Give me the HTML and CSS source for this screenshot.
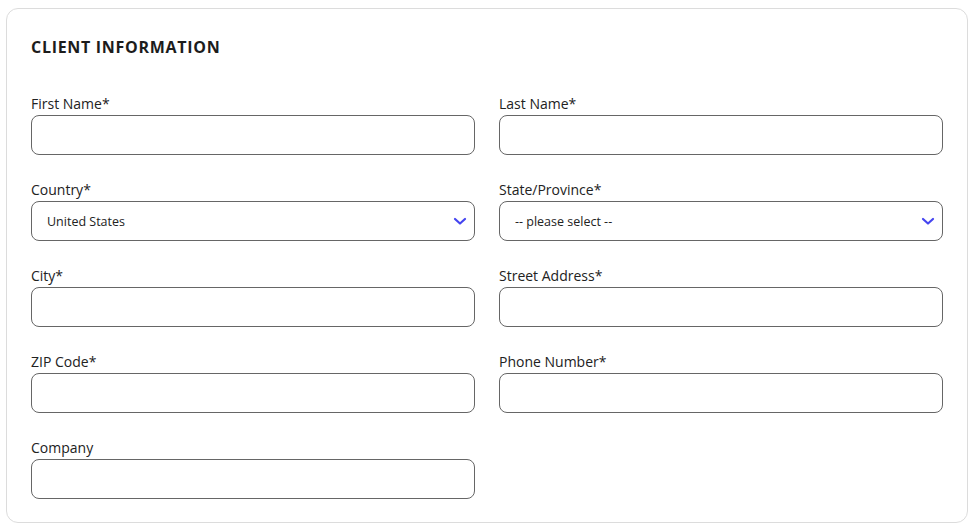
FILE: index.html
```html
<!DOCTYPE html>
<html lang="en">

<head>
  <meta charset="UTF-8" />
  <meta name="viewport" content="width=device-width, initial-scale=1.0" />
  <title>Client Information</title>
  <link rel="stylesheet" href="styles.css">
</head>

<body>
  <div class="card">
    <h2 class="card-title">CLIENT INFORMATION</h2>

    <div class="form-grid">
      <div class="form-group">
        <label for="firstName">First Name*</label>
        <input type="text" id="firstName">
      </div>
      <div class="form-group">
        <label for="lastName">Last Name*</label>
        <input type="text" id="lastName">
      </div>

      <div class="form-group">
        <label for="country">Country*</label>
        <div class="select-wrap">
          <select id="country">
            <option>United States</option>
            <option>Canada</option>
          </select>
          <svg class="chevron" width="14" height="9" viewBox="0 0 14 9">
            <path d="M2 2 L7 6.5 L12 2" fill="none" stroke="#4545f0" stroke-width="2.2" stroke-linecap="round" stroke-linejoin="round" />
          </svg>
        </div>
      </div>
      <div class="form-group">
        <label for="state">State/Province*</label>
        <div class="select-wrap">
          <select id="state">
            <option>-- please select --</option>
          </select>
          <svg class="chevron" width="14" height="9" viewBox="0 0 14 9">
            <path d="M2 2 L7 6.5 L12 2" fill="none" stroke="#4545f0" stroke-width="2.2" stroke-linecap="round" stroke-linejoin="round" />
          </svg>
        </div>
      </div>

      <div class="form-group">
        <label for="city">City*</label>
        <input type="text" id="city">
      </div>
      <div class="form-group">
        <label for="street">Street Address*</label>
        <input type="text" id="street">
      </div>

      <div class="form-group">
        <label for="zip">ZIP Code*</label>
        <input type="text" id="zip">
      </div>
      <div class="form-group">
        <label for="phone">Phone Number*</label>
        <input type="text" id="phone">
      </div>

      <div class="form-group">
        <label for="company">Company</label>
        <input type="text" id="company">
      </div>
    </div>
  </div>
</body>

</html>
```

FILE: styles.css
```css
body {
  font-family: "Open Sans", Arial, sans-serif;
  color: #222;
  background: #fff;
  margin: 8px 6px;
}

.card {
  border: 1px solid #dcdcdc;
  border-radius: 12px;
  padding: 24px 24px 22px;
  box-sizing: border-box;
  height: 515px;
}

.card-title {
  font-size: 16px;
  font-weight: 700;
  letter-spacing: 0.7px;
  color: #1c1c1c;
  margin: 1px 0 34px;
  line-height: 26px;
}

.form-grid {
  display: grid;
  grid-template-columns: 1fr 1fr;
  column-gap: 24px;
  row-gap: 25px;
}

.form-group label {
  display: block;
  font-size: 14px;
  line-height: 20px;
  margin-bottom: 1px;
  color: #222;
}

.form-group input,
.form-group select {
  display: block;
  width: 100%;
  height: 40px;
  box-sizing: border-box;
  border: 1px solid #666;
  border-radius: 8px;
  background: #fff;
  font-family: inherit;
  color: #222;
}

.form-group select {
  appearance: none;
  -webkit-appearance: none;
  font-size: 12.5px;
  padding: 0 36px 0 15px;
  outline: none;
}

.select-wrap {
  position: relative;
}

.chevron {
  position: absolute;
  right: 8px;
  top: 16px;
  pointer-events: none;
}
```
